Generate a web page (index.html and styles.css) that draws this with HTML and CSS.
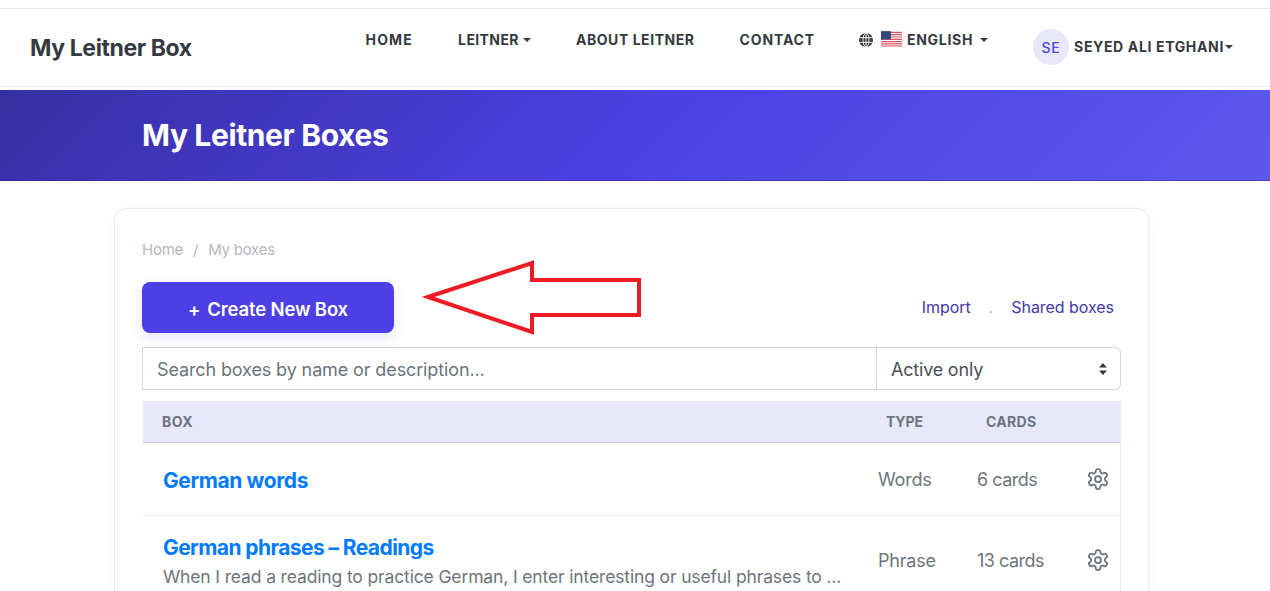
FILE: index.html
```html
<!DOCTYPE html>
<html lang="en">
<head>
<meta charset="utf-8">
<title>My Leitner Boxes</title>
<link rel="stylesheet" href="styles.css">
</head>
<body>
<header class="navbar">
  <a class="brand">My Leitner Box</a>
  <nav class="nav">
    <a class="nav-link link-home">HOME</a>
    <a class="nav-link link-leitner">LEITNER<i class="caret"></i></a>
    <a class="nav-link link-about">ABOUT LEITNER</a>
    <a class="nav-link link-contact">CONTACT</a>
    <a class="nav-link link-lang">
      <svg class="globe" viewBox="0 0 16 16"><circle cx="8" cy="8" r="8" fill="#343a40"/><g fill="none" stroke="#fff" stroke-width="1"><ellipse cx="8" cy="8" rx="3.4" ry="8"/><path d="M0 5.3h16M0 10.7h16M8 0v16"/></g></svg>
      <svg class="flag" viewBox="0 0 20 15"><rect width="20" height="15" rx="1.5" fill="#fff"/><path d="M0 1.2h20M0 3.4h20M0 5.6h20M0 7.8h20M0 10h20M0 12.2h20M0 14.2h20" stroke="#d9505f" stroke-width="1.1"/><rect width="9.5" height="7.8" fill="#34487e"/></svg>
      <span>ENGLISH</span><i class="caret caret-lang"></i>
    </a>
    <a class="user">
      <span class="avatar">SE</span>
      <span class="nav-link user-name">SEYED ALI ETGHANI<i class="caret caret-user"></i></span>
    </a>
  </nav>
</header>

<section class="banner">
  <h1 class="banner-title">My Leitner Boxes</h1>
</section>

<main class="card">
  <div class="crumbs"><span>Home</span><span class="sep">/</span><span>My boxes</span></div>
  <div class="actions">
    <button class="btn-create"><span class="plus">+</span>Create New Box</button>
    <div class="links"><a>Import</a><span class="dot">.</span><a>Shared boxes</a></div>
  </div>
  <div class="filter">
    <div class="search">Search boxes by name or description...</div>
    <div class="select">Active only
      <svg class="updown" viewBox="0 0 10 12"><path d="M5 0l4 4.6H1zM5 12L1 7.4h8z" fill="#343a40"/></svg>
    </div>
  </div>
  <div class="table">
    <div class="thead">
      <span class="th-box">BOX</span><span class="th-type">TYPE</span><span class="th-cards">CARDS</span><span></span>
    </div>
    <div class="row row-first">
      <div class="cell-name"><a class="box-name">German words</a></div>
      <span class="cell">Words</span>
      <span class="cell cell-cards">6 cards</span>
      <svg class="gear" viewBox="0 0 24 24"><path d="M12.22 2h-.44a2 2 0 0 0-2 2v.18a2 2 0 0 1-1 1.73l-.43.25a2 2 0 0 1-2 0l-.15-.08a2 2 0 0 0-2.73.73l-.22.38a2 2 0 0 0 .73 2.73l.15.1a2 2 0 0 1 1 1.72v.51a2 2 0 0 1-1 1.74l-.15.09a2 2 0 0 0-.73 2.73l.22.38a2 2 0 0 0 2.73.73l.15-.08a2 2 0 0 1 2 0l.43.25a2 2 0 0 1 1 1.73V20a2 2 0 0 0 2 2h.44a2 2 0 0 0 2-2v-.18a2 2 0 0 1 1-1.73l.43-.25a2 2 0 0 1 2 0l.15.08a2 2 0 0 0 2.73-.73l.22-.39a2 2 0 0 0-.73-2.73l-.15-.08a2 2 0 0 1-1-1.74v-.5a2 2 0 0 1 1-1.74l.15-.09a2 2 0 0 0 .73-2.73l-.22-.38a2 2 0 0 0-2.73-.73l-.15.08a2 2 0 0 1-2 0l-.43-.25a2 2 0 0 1-1-1.73V4a2 2 0 0 0-2-2z"/><circle cx="12" cy="12" r="3"/></svg>
    </div>
    <div class="row row-second">
      <div class="cell-name"><a class="box-name box-name-long">German phrases – Readings</a>
        <p class="box-desc">When I read a reading to practice German, I enter interesting or useful phrases to ...</p></div>
      <span class="cell">Phrase</span>
      <span class="cell cell-cards">13 cards</span>
      <svg class="gear" viewBox="0 0 24 24"><path d="M12.22 2h-.44a2 2 0 0 0-2 2v.18a2 2 0 0 1-1 1.73l-.43.25a2 2 0 0 1-2 0l-.15-.08a2 2 0 0 0-2.73.73l-.22.38a2 2 0 0 0 .73 2.73l.15.1a2 2 0 0 1 1 1.72v.51a2 2 0 0 1-1 1.74l-.15.09a2 2 0 0 0-.73 2.73l.22.38a2 2 0 0 0 2.73.73l.15-.08a2 2 0 0 1 2 0l.43.25a2 2 0 0 1 1 1.73V20a2 2 0 0 0 2 2h.44a2 2 0 0 0 2-2v-.18a2 2 0 0 1 1-1.73l.43-.25a2 2 0 0 1 2 0l.15.08a2 2 0 0 0 2.73-.73l.22-.39a2 2 0 0 0-.73-2.73l-.15-.08a2 2 0 0 1-1-1.74v-.5a2 2 0 0 1 1-1.74l.15-.09a2 2 0 0 0 .73-2.73l-.22-.38a2 2 0 0 0-2.73-.73l-.15.08a2 2 0 0 1-2 0l-.43-.25a2 2 0 0 1-1-1.73V4a2 2 0 0 0-2-2z"/><circle cx="12" cy="12" r="3"/></svg>
    </div>
  </div>
</main>

<svg class="annotation" viewBox="0 0 1270 591"><polygon points="428,297 532,263 532,280 639,280 639,315 532,315 532,332" fill="none" stroke="#ed1c24" stroke-width="4"/></svg>
</body>
</html>
```
FILE: styles.css
```css
* { box-sizing: border-box; }
html, body { margin: 0; height: 591px; overflow: hidden; background: #fff; }
body { position: relative; font-family: Inter, "Liberation Sans", sans-serif; color: #343a40; }
a { color: inherit; text-decoration: none; }

.navbar {
  margin-top: 8px; height: 79px; border-top: 1px solid #e5e7eb; border-bottom: 1px solid #e9ecef;
  display: flex; justify-content: space-between; padding: 0 37px 0 30px;
}
.brand { font-size: 23px; font-weight: 700; letter-spacing: -0.4px; line-height: 78px; height: 77px; color: #343a40; }
.nav { display: flex; align-items: flex-start; }
.nav-link { font-size: 14px; font-weight: 700; letter-spacing: 0.7px; line-height: 20px; color: #343a40; display: inline-flex; align-items: center; }
.nav > .nav-link { margin-top: 21px; }
.link-home { margin-right: 45px; letter-spacing: 1.2px; }
.link-leitner { margin-right: 45px; letter-spacing: 0.4px; }
.link-about { margin-right: 45px; letter-spacing: 0.55px; }
.link-contact { margin-right: 44px; letter-spacing: 0.85px; }
.link-lang { margin-right: 45px; }
.caret { display: inline-block; margin-left: 4px; border-top: 4px solid #343a40; border-left: 4px solid transparent; border-right: 4px solid transparent; }
.caret-lang { margin-left: 7px; }
.caret-user { margin-left: 1px; }
.user-name { letter-spacing: 0.65px; }
.globe { width: 14px; height: 14px; margin-right: 8px; }
.flag { width: 21px; height: 16px; margin-right: 5px; margin-top: -3px; }
.user { display: flex; align-items: center; margin-top: 20px; gap: 5px; }
.avatar { width: 36px; height: 36px; border-radius: 50%; background: #e9e7fb; color: #4f46e5; font-size: 14px; font-weight: 500; letter-spacing: 0.7px; display: flex; align-items: center; justify-content: center; }

.banner {
  margin-top: 3px; height: 91px; padding: 0 142px; display: flex; align-items: center;
  background: linear-gradient(135deg, #3730a3 0%, #4c40e3 50%, #5c58ec 100%);
  border-bottom: 1px solid rgba(40,30,140,0.35);
}
.banner-title { margin: 0; font-size: 30px; font-weight: 700; letter-spacing: -0.37px; color: #fff; }

.card {
  margin: 27px 121px 0 114px; padding: 30px 27px 0; height: 383px; overflow: hidden;
  border: 1px solid #e9ecef; border-bottom: 0; border-radius: 12px 12px 0 0; background: #fff; box-shadow: 0 2px 12px rgba(0,0,0,0.03);
}
.crumbs { display: flex; gap: 10px; font-size: 15px; line-height: 22px; color: #b4b8bf; letter-spacing: -0.25px; }
.actions { margin-top: 21px; display: flex; justify-content: space-between; align-items: center; padding-right: 7px; }
.btn-create {
  width: 252px; height: 51px; border: 0; border-radius: 8px; background: #4c40e4; color: #fff; padding: 3px 0 0;
  font-family: inherit; font-size: 18.5px; font-weight: 600; letter-spacing: -0.15px;
  box-shadow: 0 4px 12px rgba(79,70,229,0.15);
}
.plus { margin-right: 7px; }
.links { display: flex; gap: 18px; font-size: 16px; color: #4338a8; letter-spacing: -0.05px; align-items: center; padding-bottom: 2px; }
.dot { color: #b4b8cc; font-weight: 400; }
.filter { margin-top: 14px; display: flex; height: 43px; }
.search {
  width: 735px; border: 1px solid #ced4da; padding-left: 14px; font-size: 18px; line-height: 43px; color: #6c757d; letter-spacing: -0.12px;
}
.select {
  flex: 1; border: 1px solid #ced4da; border-left: 0; border-radius: 0 6px 6px 0; padding: 1px 12px 0 14px;
  display: flex; justify-content: space-between; align-items: center; font-size: 18px; color: #495057; letter-spacing: -0.2px;
}
.updown { width: 10px; height: 12px; margin-top: -1px; }
.table { margin: 11px 0 0 1px; }
.thead, .row { display: grid; grid-template-columns: 725px 99px 111px 43px; }
.thead {
  height: 42px; background: #e9e7fb; border-bottom: 1px solid #c7c4f5; align-items: center;
  font-size: 14px; font-weight: 700; letter-spacing: 0.5px; color: #6c757d;
}
.th-box { padding-left: 19px; }
.th-type { padding-left: 18px; letter-spacing: -0.1px; }
.th-cards { padding-left: 19px; letter-spacing: 0.3px; }
.row { height: 73px; align-items: center; border-bottom: 1px solid #e9ecef; border-right: 1px solid #e9ecef; }
.row-second { height: 90px; border-bottom: 0; }
.cell-name { padding-left: 20px; }
.box-name { display: block; font-size: 21px; font-weight: 700; letter-spacing: -0.4px; color: #007bff; line-height: 28px; }
.row-first .box-name { margin-top: 3px; }
.box-name-long { letter-spacing: -0.58px; margin-top: 2px; }
.box-desc { margin: 2px 0 0; font-size: 17.5px; line-height: 26px; color: #6c757d; letter-spacing: -0.14px; white-space: nowrap; }
.cell { padding-left: 10px; font-size: 18px; color: #6c757d; letter-spacing: -0.2px; }
.cell-cards { letter-spacing: -0.5px; }
.row-second .cell { margin-bottom: 1px; }
.gear { width: 24px; height: 24px; margin-left: 8px; fill: none; stroke: #6c757d; stroke-width: 1.75; stroke-linecap: round; stroke-linejoin: round; }
.row-second .gear { margin-bottom: 2px; }

.annotation { position: absolute; left: 0; top: 0; width: 1270px; height: 591px; pointer-events: none; }
```
